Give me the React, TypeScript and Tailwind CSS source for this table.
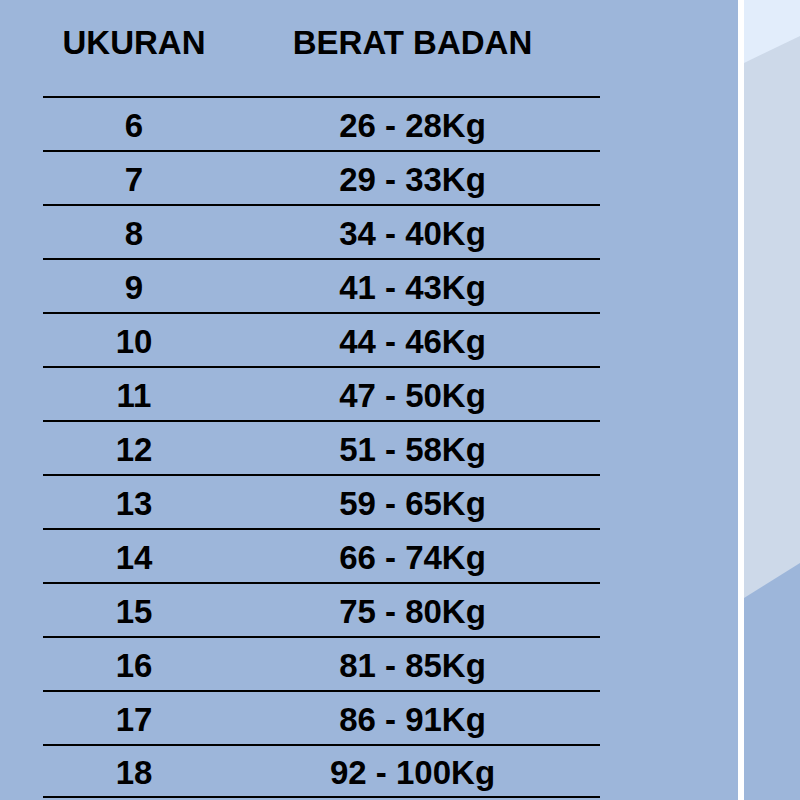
import React from 'react';

const sizes = [
  { size: '6', weight: '26 - 28Kg' },
  { size: '7', weight: '29 - 33Kg' },
  { size: '8', weight: '34 - 40Kg' },
  { size: '9', weight: '41 - 43Kg' },
  { size: '10', weight: '44 - 46Kg' },
  { size: '11', weight: '47 - 50Kg' },
  { size: '12', weight: '51 - 58Kg' },
  { size: '13', weight: '59 - 65Kg' },
  { size: '14', weight: '66 - 74Kg' },
  { size: '15', weight: '75 - 80Kg' },
  { size: '16', weight: '81 - 85Kg' },
  { size: '17', weight: '86 - 91Kg' },
  { size: '18', weight: '92 - 100Kg' },
];

const SideDecor: React.FC = () => (
  <svg className="block w-full h-full" viewBox="0 0 56 800" preserveAspectRatio="none">
    <rect x="0" y="0" width="56" height="800" fill="#cdd9e9" />
    <polygon points="0,0 56,0 56,36 0,63" fill="#e2edfb" />
    <polygon points="0,598 56,563 56,800 0,800" fill="#9db6da" />
  </svg>
);

export default function App() {
  return (
    <div
      className="w-[800px] h-[800px] overflow-hidden flex bg-[#9db6da] text-black"
      style={{ fontFamily: '"Liberation Sans", Arial, sans-serif' }}
    >
      {/* Size table */}
      <div className="w-[738px] shrink-0 pl-[43px]">
        <div className="w-[557px]">
          <div className="h-[96px] pt-[24px] grid grid-cols-[182px_375px] text-[33px] leading-[38px] font-bold">
            <div className="text-center">UKURAN</div>
            <div className="text-center">BERAT BADAN</div>
          </div>
          {sizes.map((row, i) => (
            <div
              key={row.size}
              className={`h-[54px] border-t-2 border-black grid grid-cols-[182px_375px] items-center pt-[4px] text-[33px] leading-[38px] font-bold ${
                i === sizes.length - 1 ? 'border-b-2' : ''
              }`}
            >
              <div className="text-center">{row.size}</div>
              <div className="text-center">{row.weight}</div>
            </div>
          ))}
        </div>
      </div>

      {/* White divider */}
      <div className="w-[6px] shrink-0 bg-white" />

      {/* Right side decoration */}
      <div className="flex-1">
        <SideDecor />
      </div>
    </div>
  );
}
